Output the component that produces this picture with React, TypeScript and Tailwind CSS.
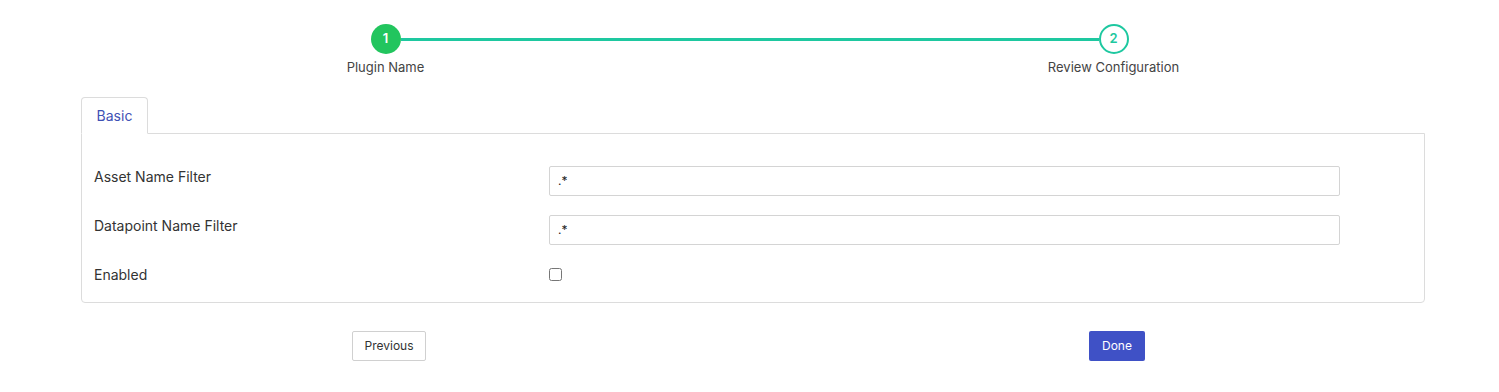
import React from "react";

const font = { fontFamily: "Inter, 'Noto Sans', sans-serif" };

function Stepper() {
    return (
        <div className="pt-6">
            <div className="mx-auto flex w-[758px] items-center">
                <div className="flex h-[30px] w-[30px] items-center justify-center rounded-full bg-[#22c55e] text-[13px] font-semibold text-white">
                    1
                </div>
                <div className="h-[3px] flex-1 bg-[#1ec8a0]" />
                <div className="flex h-[30px] w-[30px] items-center justify-center rounded-full border-2 border-[#1ec8a0] bg-white text-[13px] font-semibold text-[#1ec8a0]">
                    2
                </div>
            </div>
            <div className="mx-auto mt-[4px] flex w-[888px] justify-between text-[13px] text-[#444]">
                <div className="w-[160px] text-center">Plugin Name</div>
                <div className="w-[160px] text-center">Review Configuration</div>
            </div>
        </div>
    );
}

function Row({ label, children }: { label: string; children: React.ReactNode }) {
    return (
        <div className="flex items-start">
            <div className="w-[455px] text-[14px] text-[#333]">{label}</div>
            {children}
        </div>
    );
}

export default function App() {
    return (
        <div className="min-h-[392px] bg-white" style={font}>
            <Stepper />

            <div className="ml-[81px] mt-[19px] w-[1344px]">
                <div className="flex">
                    <div className="-mb-px flex h-[37px] w-[67px] items-center justify-center rounded-t-[4px] border border-b-white border-[#dcdcdc] bg-white text-[14px] text-[#3f51b5]">
                        Basic
                    </div>
                </div>
                <div className="flex flex-col gap-[19px] rounded-b-[4px] border border-[#dcdcdc] pb-[17px] pl-[12px] pt-[32px]">
                    <Row label="Asset Name Filter">
                        <input
                            defaultValue=".*"
                            className="h-[30px] w-[791px] rounded-[2px] border border-[#d4d4d4] px-[8px] text-[12px] text-[#222] outline-none"
                        />
                    </Row>
                    <Row label="Datapoint Name Filter">
                        <input
                            defaultValue=".*"
                            className="h-[30px] w-[791px] rounded-[2px] border border-[#d4d4d4] px-[8px] text-[12px] text-[#222] outline-none"
                        />
                    </Row>
                    <div className="flex items-center">
                        <div className="w-[455px] text-[14px] text-[#333]">Enabled</div>
                        <input type="checkbox" className="h-[13px] w-[13px]" />
                    </div>
                </div>
            </div>

            <div className="mt-[28px] flex">
                <div className="flex w-[778px] justify-center">
                    <button className="h-[30px] w-[74px] rounded-[2px] border border-[#d0d0d0] bg-white text-[12px] text-[#333]">
                        Previous
                    </button>
                </div>
                <div className="ml-[311px] flex">
                    <button className="h-[30px] w-[56px] rounded-[2px] bg-[#3f51c6] text-[12px] text-white">
                        Done
                    </button>
                </div>
            </div>
        </div>
    );
}
